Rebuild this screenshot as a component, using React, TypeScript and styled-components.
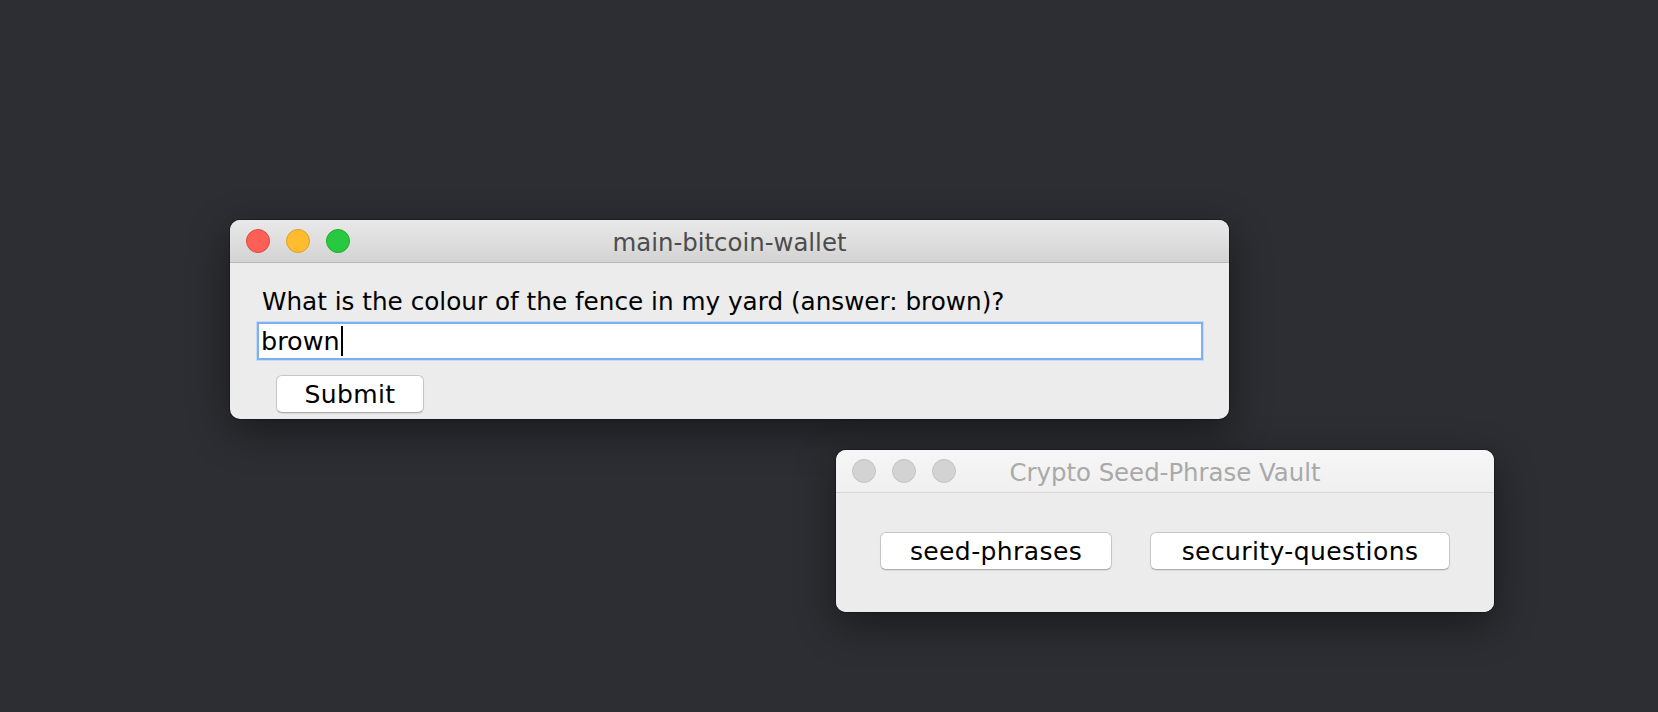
import React from "react";
import styled, { createGlobalStyle } from "styled-components";

const Global = createGlobalStyle`
  html, body { margin: 0; padding: 0; }
  body {
    width: 1658px;
    height: 712px;
    background: #2d2e33;
    overflow: hidden;
    font-family: "DejaVu Sans", "Liberation Sans", sans-serif;
  }
`;

const Desktop = styled.div`
  position: relative;
  width: 1658px;
  height: 712px;
  background: #2d2e33;
`;

const Window = styled.div<{ $x: number; $y: number; $w: number; $h: number }>`
  position: absolute;
  left: ${(p) => p.$x}px;
  top: ${(p) => p.$y}px;
  width: ${(p) => p.$w}px;
  height: ${(p) => p.$h}px;
  border-radius: 10px;
  overflow: hidden;
  background: #ececec;
  display: flex;
  flex-direction: column;
  box-shadow: 0 12px 40px rgba(0, 0, 0, 0.45), 0 0 0 1px rgba(0, 0, 0, 0.25);
`;

const TitleBar = styled.div<{ $active: boolean }>`
  position: relative;
  height: 42px;
  flex: 0 0 42px;
  display: flex;
  align-items: center;
  padding-left: 16px;
  gap: 16px;
  border-bottom: 1px solid ${(p) => (p.$active ? "#b9b9b9" : "#d6d6d6")};
  background: ${(p) =>
    p.$active
      ? "linear-gradient(#e9e9e9, #d3d3d3)"
      : "linear-gradient(#f6f6f6, #f0f0f0)"};
`;

const Light = styled.span<{ $fill: string; $edge: string }>`
  width: 22px;
  height: 22px;
  border-radius: 50%;
  background: ${(p) => p.$fill};
  border: 1px solid ${(p) => p.$edge};
  flex: 0 0 auto;
`;

const Title = styled.div<{ $active: boolean }>`
  position: absolute;
  left: 0;
  right: 0;
  top: 0;
  bottom: 0;
  display: flex;
  align-items: center;
  justify-content: center;
  padding-top: 2px;
  font-size: 24.4px;
  color: ${(p) => (p.$active ? "#4c4c4c" : "#a9a9a9")};
  pointer-events: none;
`;

const MainBody = styled.div`
  flex: 1;
  display: flex;
  flex-direction: column;
  padding: 24px 26px 0 27px;
`;

const Question = styled.div`
  font-size: 24.7px;
  color: #000;
  line-height: 30px;
  padding-left: 5px;
  margin-bottom: 5px;
`;

const Field = styled.div`
  height: 34px;
  background: #fff;
  border: 2px solid #7eb0ee;
  box-shadow: 0 0 0 1px #c5dcf7;
  display: flex;
  align-items: center;
  padding-left: 2px;
  font-size: 25.5px;
  color: #000;
`;

const Caret = styled.span`
  display: inline-block;
  width: 2px;
  height: 30px;
  background: #000;
  margin-left: 1px;
`;

const Button = styled.div<{ $w: number }>`
  width: ${(p) => p.$w}px;
  height: 36px;
  box-sizing: content-box;
  background: #fff;
  border: 1px solid #c6c6c6;
  border-bottom-color: #adadad;
  border-radius: 6px;
  box-shadow: 0 1px 1px rgba(0, 0, 0, 0.08);
  display: flex;
  align-items: center;
  justify-content: center;
  font-size: 25px;
  letter-spacing: 0.4px;
  color: #000;
`;

const SubmitRow = styled.div`
  padding-left: 19px;
  margin-top: 15px;
`;

const VaultBody = styled.div`
  flex: 1;
  display: flex;
  justify-content: center;
  align-items: flex-start;
  padding-top: 39px;
  gap: 38px;
  background: #ececec;
`;

export default function App() {
  return (
    <>
      <Global />
      <Desktop>
        <Window $x={230} $y={220} $w={999} $h={199}>
          <TitleBar $active>
            <Light $fill="#fe5f57" $edge="#e2463f" />
            <Light $fill="#febc2e" $edge="#dfa023" />
            <Light $fill="#28c840" $edge="#1dad2b" />
            <Title $active>main-bitcoin-wallet</Title>
          </TitleBar>
          <MainBody>
            <Question>What is the colour of the fence in my yard (answer: brown)?</Question>
            <Field>
              brown
              <Caret />
            </Field>
            <SubmitRow>
              <Button $w={146}>Submit</Button>
            </SubmitRow>
          </MainBody>
        </Window>
        <Window $x={836} $y={450} $w={658} $h={162}>
          <TitleBar $active={false}>
            <Light $fill="#d3d3d3" $edge="#c3c3c3" />
            <Light $fill="#d3d3d3" $edge="#c3c3c3" />
            <Light $fill="#d3d3d3" $edge="#c3c3c3" />
            <Title $active={false}>Crypto Seed-Phrase Vault</Title>
          </TitleBar>
          <VaultBody>
            <Button $w={230}>seed-phrases</Button>
            <Button $w={298}>security-questions</Button>
          </VaultBody>
        </Window>
      </Desktop>
    </>
  );
}
